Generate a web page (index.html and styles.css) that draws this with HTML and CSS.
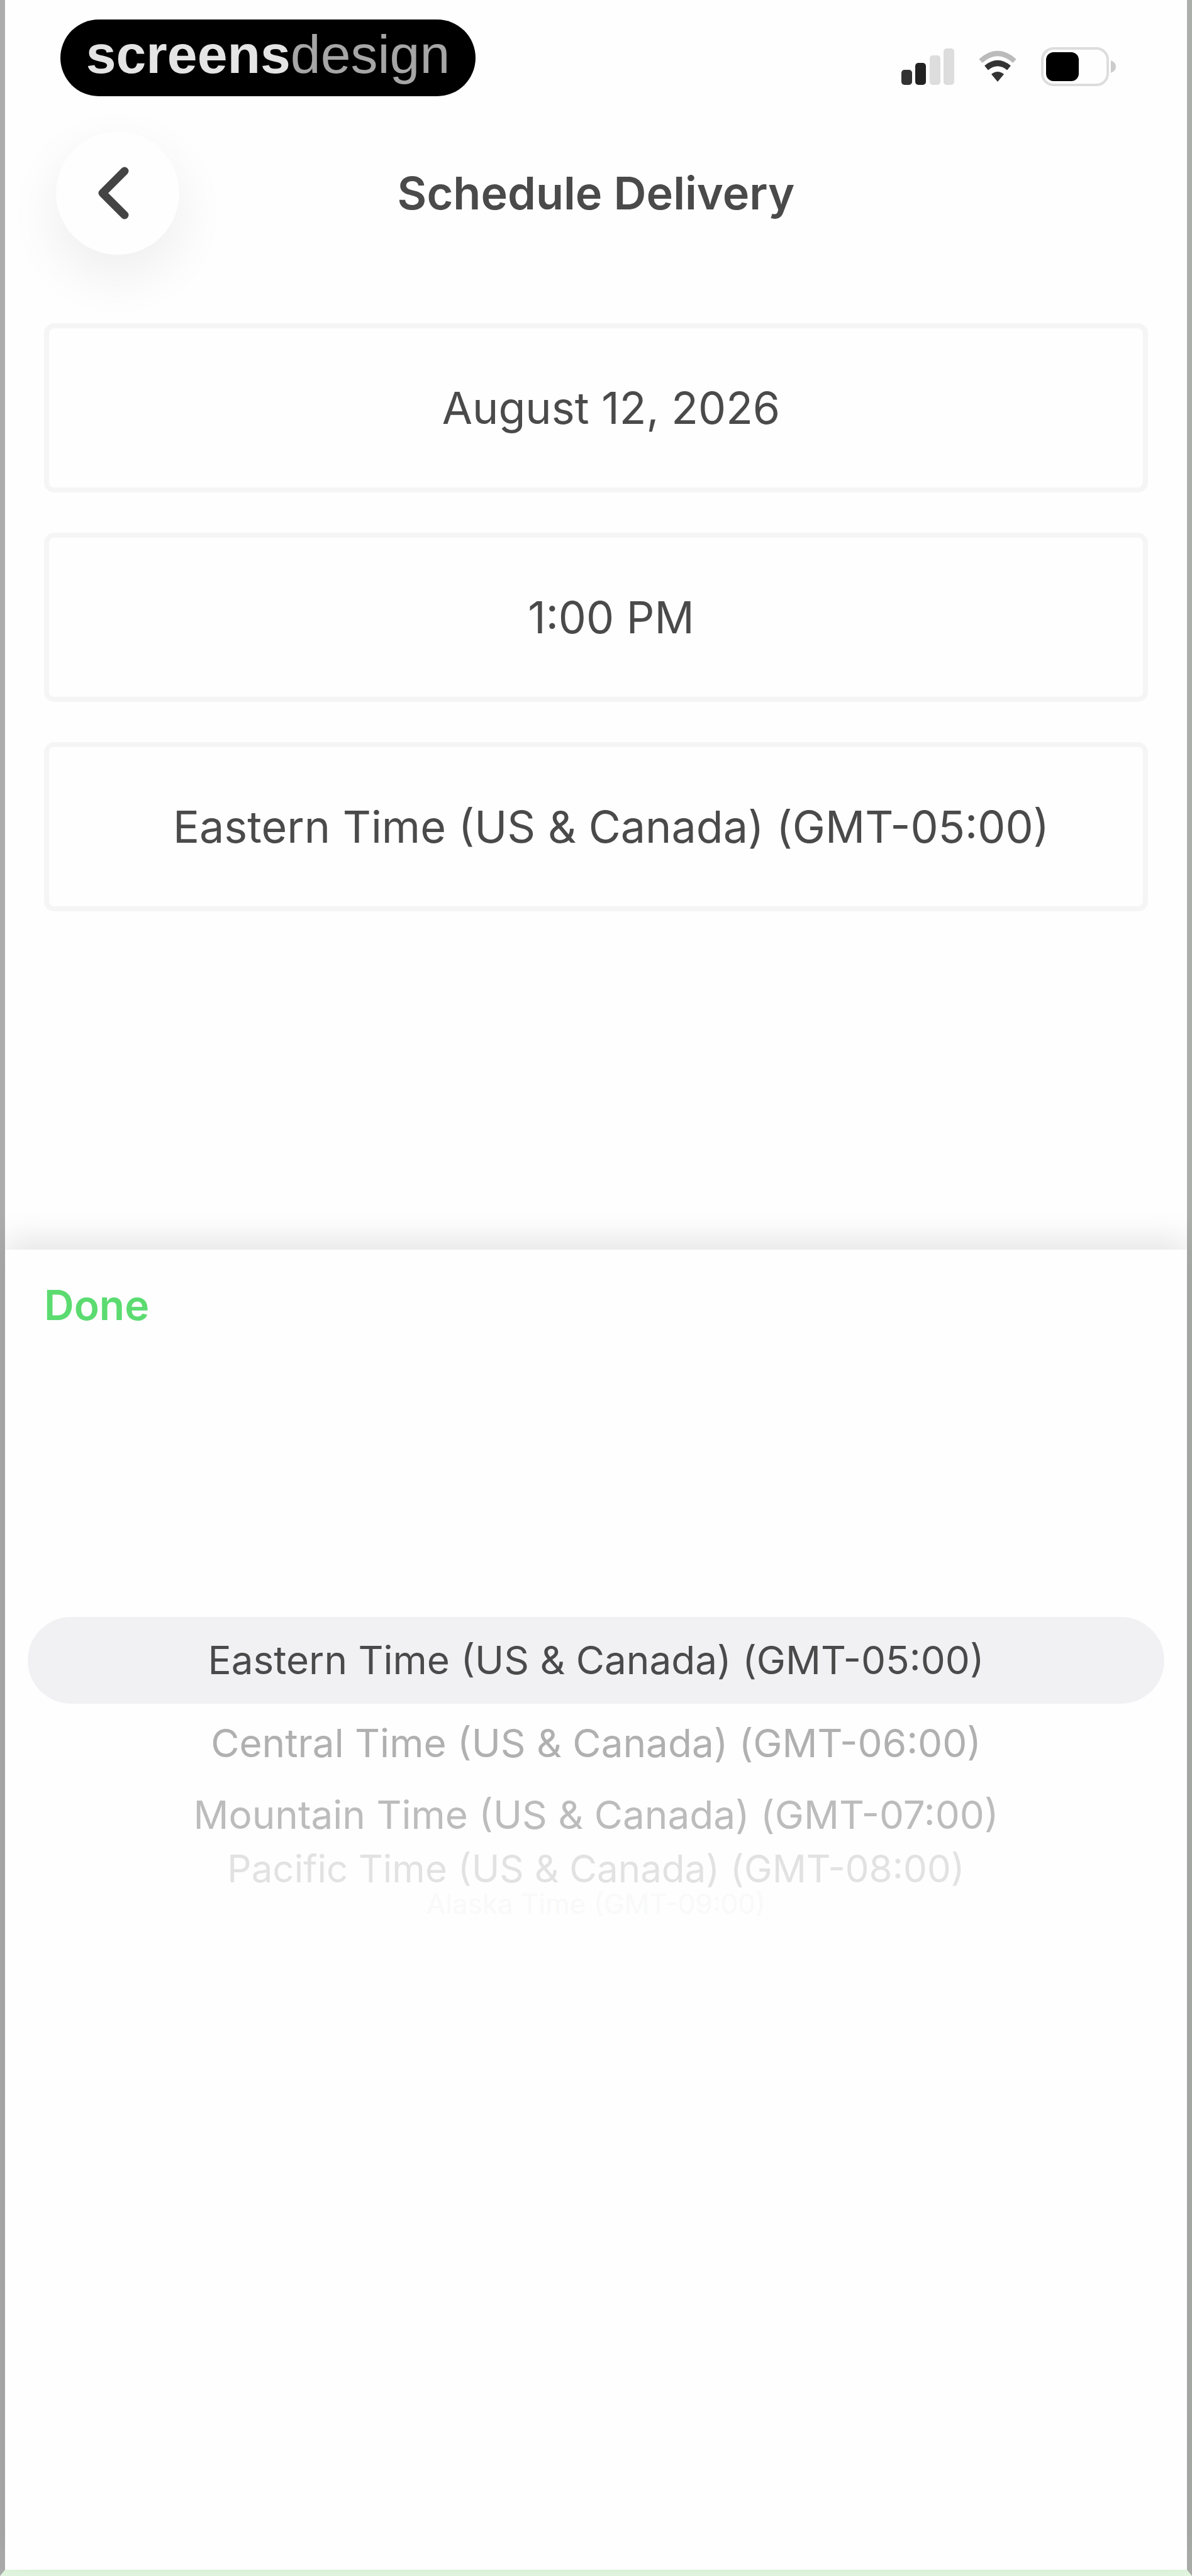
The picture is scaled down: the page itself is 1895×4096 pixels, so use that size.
FILE: index.html
```html
<!DOCTYPE html>
<html lang="en">
  <head>
    <meta charset="UTF-8" />
    <meta name="viewport" content="width=device-width, initial-scale=1.0" />
    <title>Schedule Delivery</title>
    <link rel="stylesheet" href="styles.css">
  </head>
  <body>
    <div class="screen">
      <div class="statusBar">
        <div class="badge"><b>screens</b><span>design</span></div>
        <div class="statusIcons">
          <svg class="signal" viewBox="0 0 84 58">
            <rect x="0" y="34" width="17" height="24" rx="5" fill="#333" />
            <rect x="22" y="23" width="17" height="35" rx="5" fill="#222" />
            <rect x="45" y="11" width="17" height="47" rx="5" fill="#ddd" />
            <rect x="67" y="0" width="17" height="58" rx="5" fill="#ddd" />
          </svg>
          <svg class="wifi" viewBox="0 0 62 52">
            <path d="M4 17 Q31 -7 58 17" fill="none" stroke="#bbb" stroke-width="8" />
            <path d="M13 28 Q31 13 49 28" fill="none" stroke="#333" stroke-width="9" />
            <path d="M21 38 Q31 30 41 38 L31 50 Z" fill="#333" />
          </svg>
          <svg class="battery" viewBox="0 0 120 62">
            <rect x="2" y="2" width="104" height="58" rx="18" fill="none" stroke="#ddd" stroke-width="4" />
            <path d="M111 21 Q119 24 119 31 Q119 38 111 41 Z" fill="#ccc" />
            <rect x="8" y="8" width="52" height="46" rx="12" fill="#000" />
          </svg>
        </div>
      </div>

      <div class="header">
        <button class="back" type="button" aria-label="Back">
          <svg viewBox="0 0 54 86">
            <path d="M45 8 L10 43 L45 78" fill="none" stroke="#444" stroke-width="13" stroke-linecap="round" stroke-linejoin="round" />
          </svg>
        </button>
        <h1 class="title">Schedule Delivery</h1>
      </div>

      <div class="fields">
        <button class="field" type="button">August 12, 2026</button>
        <button class="field" type="button">1:00 PM</button>
        <button class="field" type="button">Eastern Time (US &amp; Canada) (GMT-05:00)</button>
      </div>

      <div class="sheet">
        <button class="done" type="button">Done</button>
        <div class="picker" role="listbox" aria-label="Time zone">
          <div class="option selected" role="option" aria-selected="true">Eastern Time (US &amp; Canada) (GMT-05:00)</div>
          <div class="option near" role="option">Central Time (US &amp; Canada) (GMT-06:00)</div>
          <div class="option mid" role="option">Mountain Time (US &amp; Canada) (GMT-07:00)</div>
          <div class="option far" role="option">Pacific Time (US &amp; Canada) (GMT-08:00)</div>
          <div class="option last" role="option">Alaska Time (GMT-09:00)</div>
        </div>
      </div>
    </div>
  </body>
</html>
```

FILE: styles.css
```css
* {
  box-sizing: border-box;
}

body {
  margin: 0;
  background: #fefefe;
  font-family: Inter, "Liberation Sans", sans-serif;
  color: #4a4a4a;
}

button {
  margin: 0;
  padding: 0;
  border: none;
  background: none;
  font: inherit;
  color: inherit;
  cursor: pointer;
}

svg {
  display: block;
}

.screen {
  display: flex;
  flex-direction: column;
  min-height: 100vh;
  border-left: 8px solid #acacac;
  border-right: 8px solid #acaeac;
  border-bottom: 10px solid #e2f7df;
}

.statusBar {
  display: flex;
  justify-content: space-between;
  align-items: center;
  padding: 31px 112px 0 88px;
}

.badge {
  width: 660px;
  height: 122px;
  padding-bottom: 12px;
  border-radius: 61px;
  background: #000;
  display: flex;
  justify-content: center;
  align-items: center;
  font-family: "Liberation Sans", sans-serif;
  font-size: 86px;
  line-height: 96px;
  color: #a6a6a6;
}
.badge b {
  color: #e4e4e4;
}

.statusIcons {
  display: flex;
  align-items: center;
  gap: 38px;
  padding-top: 28px;
}
.signal {
  width: 84px;
  height: 58px;
}
.wifi {
  width: 62px;
  height: 52px;
}
.battery {
  width: 120px;
  height: 62px;
}

.header {
  display: grid;
  grid-template-columns: 196px 1fr 196px;
  align-items: center;
  padding: 56px 81px 0;
}

.back {
  width: 196px;
  height: 196px;
  border-radius: 50%;
  background: #fefefe;
  box-shadow: 0 32px 80px 8px rgba(0, 0, 0, 0.06);
}
.back svg {
  width: 54px;
  height: 86px;
  margin-left: 64px;
}

.title {
  margin: 0;
  text-align: center;
  font-size: 72px;
  line-height: 88px;
  font-weight: 600;
}

.fields {
  display: flex;
  flex-direction: column;
  gap: 64px;
  padding: 109px 62px 0;
}

.field {
  height: 269px;
  padding-left: 48px;
  border: 8px solid #f5f5f5;
  border-radius: 16px;
  font-size: 70px;
}

.sheet {
  flex: 1;
  margin-top: 538px;
  padding: 44px 36px 0;
  background: #fefefe;
  box-shadow: 0 -16px 48px rgba(0, 0, 0, 0.1);
}

.done {
  display: block;
  margin-left: 26px;
  font-size: 66px;
  line-height: 88px;
  font-weight: 600;
  color: #5bdb70;
}

.picker {
  margin-top: 452px;
  text-align: center;
  font-size: 62px;
}

.selected {
  border-radius: 69px;
  background: #f1f1f4;
  line-height: 138px;
}
.near {
  line-height: 126px;
  color: #b0b0b0;
}
.mid {
  line-height: 102px;
  color: #bcbcbc;
}
.far {
  font-size: 60px;
  line-height: 68px;
  color: #e2e2e2;
}
.last {
  font-size: 44px;
  line-height: 44px;
  color: #f9f9f9;
}
```
